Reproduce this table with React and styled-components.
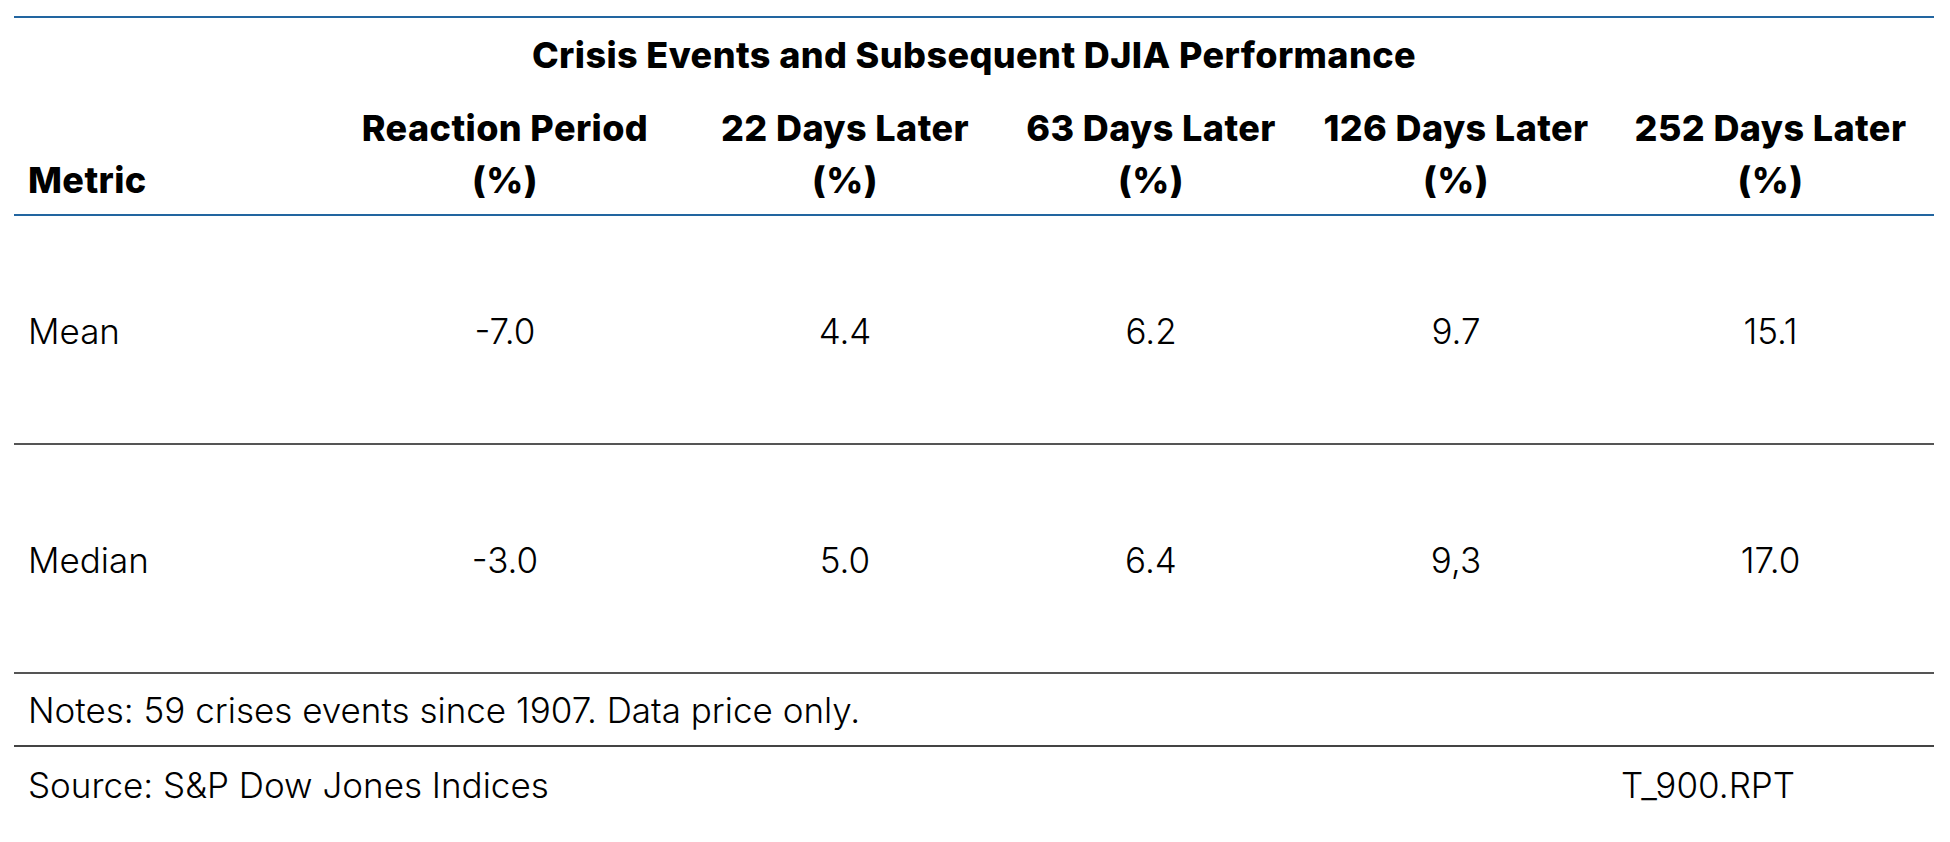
import styled, { createGlobalStyle } from 'styled-components'

const GlobalStyle = createGlobalStyle`
    html, body {
        margin: 0;
        padding: 0;
        background: #ffffff;
    }

    body {
        font-family: Inter, "Noto Sans", "Liberation Sans", sans-serif;
        color: #000000;
    }
`

const columns = [
    { key: 'metric', label: 'Metric', width: 303 },
    { key: 'reaction', label: 'Reaction Period', width: 376 },
    { key: 'd22', label: '22 Days Later', width: 304 },
    { key: 'd63', label: '63 Days Later', width: 308 },
    { key: 'd126', label: '126 Days Later', width: 302 },
    { key: 'd252', label: '252 Days Later', width: 327 },
]

const rows = [
    { metric: 'Mean', values: ['-7.0', '4.4', '6.2', '9.7', '15.1'] },
    { metric: 'Median', values: ['-3.0', '5.0', '6.4', '9,3', '17.0'] },
]

function App() {
    return (
        <Page>
            <GlobalStyle />
            <Table>
                <colgroup>
                    {columns.map((col) => (
                        <col key={col.key} style={{ width: col.width }} />
                    ))}
                </colgroup>
                <thead>
                    <tr>
                        <Title colSpan={columns.length}>
                            Crisis Events and Subsequent DJIA Performance
                        </Title>
                    </tr>
                    <tr>
                        {columns.map((col, i) => (
                            <HeadCell key={col.key} $first={i === 0}>
                                {i === 0 ? col.label : (
                                    <>
                                        {col.label}
                                        <br />
                                        (%)
                                    </>
                                )}
                            </HeadCell>
                        ))}
                    </tr>
                </thead>
                <tbody>
                    {rows.map((row) => (
                        <tr key={row.metric}>
                            <Cell $first>{row.metric}</Cell>
                            {row.values.map((v, i) => (
                                <Cell key={i}>{v}</Cell>
                            ))}
                        </tr>
                    ))}
                </tbody>
                <tfoot>
                    <tr>
                        <NoteCell colSpan={columns.length}>
                            Notes: 59 crises events since 1907. Data price only.
                        </NoteCell>
                    </tr>
                    <tr>
                        <SourceCell colSpan={columns.length - 1}>
                            Source: S&amp;P Dow Jones Indices
                        </SourceCell>
                        <SourceCell>T_900.RPT</SourceCell>
                    </tr>
                </tfoot>
            </Table>
        </Page>
    )
}

const Page = styled.div`
    padding: 16px 16px 0 14px;
    box-sizing: border-box;
    width: 1950px;
`

const Table = styled.table`
    width: 1920px;
    table-layout: fixed;
    border-collapse: collapse;
    border-top: 2px solid #2265a0;
`

const Title = styled.th`
    padding: 11px 14px 0;
    font-size: 36px;
    line-height: 52px;
    font-weight: 800;
    letter-spacing: 0.4px;
    text-align: center;
`

const HeadCell = styled.th`
    padding: 21px 14px 8px;
    font-size: 36px;
    line-height: 52px;
    font-weight: 800;
    letter-spacing: 0.4px;
    text-align: ${(p) => (p.$first ? 'left' : 'center')};
    vertical-align: bottom;
    white-space: nowrap;
    border-bottom: 2px solid #2265a0;
`

const Cell = styled.td`
    height: 225px;
    padding: 2px 14px 0;
    font-size: 35px;
    font-weight: 300;
    text-align: ${(p) => (p.$first ? 'left' : 'center')};
    vertical-align: middle;
    border-bottom: 2px solid #555555;
`

const NoteCell = styled.td`
    height: 71px;
    padding: 0 14px;
    font-size: 35px;
    font-weight: 300;
    text-align: left;
    border-bottom: 2px solid #444444;
`

const SourceCell = styled.td`
    height: 76px;
    padding: 0 14px;
    font-size: 35px;
    font-weight: 300;
    text-align: left;
`

export default App
